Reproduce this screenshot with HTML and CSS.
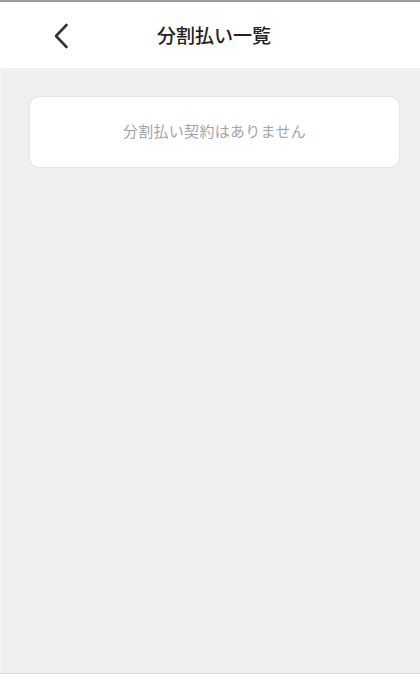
FILE: index.html
```html
<!DOCTYPE html>
<html lang="ja">
<head>
    <meta charset="UTF-8">
    <meta name="viewport" content="width=device-width, initial-scale=1.0">
    <title>分割払い一覧</title>
    <link rel="stylesheet" href="styles.css">
</head>
<body>

    <div class="header">
        <a class="back" href="#">
            <svg width="18" height="28" viewBox="0 0 18 28">
                <path d="M14.5 3 L4 14 L14.5 25" fill="none" stroke="#333333" stroke-width="2.6" stroke-linecap="round" stroke-linejoin="round"/>
            </svg>
        </a>
        <h1>分割払い一覧</h1>
    </div>

    <div class="content">
        <div class="card">
            <p>分割払い契約はありません</p>
        </div>
    </div>

</body>
</html>
```

FILE: styles.css
```css
body {
    font-family: "Noto Sans CJK JP", "Noto Sans", sans-serif;
    margin: 0;
    padding: 0;
    background-color: #ffffff;
    border-top: 2px solid #9a9a9a;
    height: 677px;
    display: flex;
    flex-direction: column;
}
.header {
    height: 66px;
    display: flex;
    align-items: center;
    justify-content: center;
    position: relative;
    background-color: #ffffff;
}
.back {
    position: absolute;
    left: 52px;
    top: 20px;
    display: block;
    width: 18px;
    height: 28px;
}
.header h1 {
    margin: 0 0 2px 8px;
    font-size: 19px;
    font-weight: 500;
    color: #222222;
}
.content {
    flex: 1;
    background-color: #eeeff1;
    border-left: 1px solid #f6f6f7;
    border-bottom: 1px solid #dadbdd;
    margin-bottom: 5px;
    padding: 29px 21px 0 29px;
}
.card {
    background-color: #ffffff;
    border-radius: 9px;
    box-shadow: 0 0 2px rgba(0, 0, 0, 0.12);
    height: 70px;
    display: flex;
    align-items: center;
    justify-content: center;
}
.card p {
    margin: 0 0 4px 0;
    font-size: 15px;
    letter-spacing: 0.3px;
    color: #a2a5aa;
}
```
